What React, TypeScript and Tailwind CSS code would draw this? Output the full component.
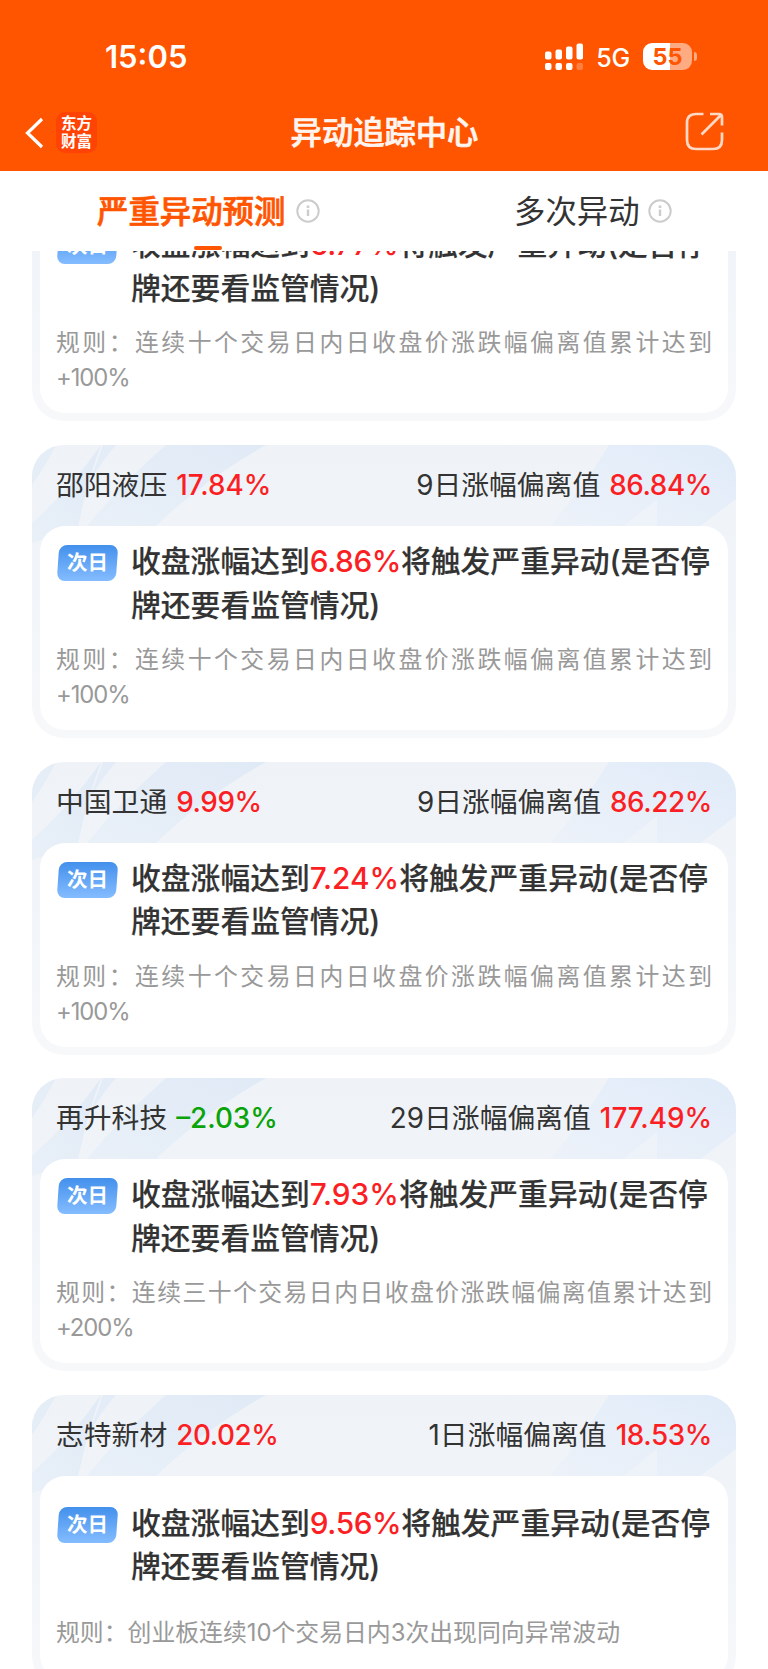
import React from "react";

type Item = { name: string; change: string; down?: boolean; days: string; dev: string; target: string; rule: string; limit?: string; roomy?: boolean };

const items: Item[] = [
  { name: "", change: "", days: "", dev: "", target: "6.77%", rule: "规则：连续十个交易日内日收盘价涨跌幅偏离值累计达到", limit: "+100%" },
  { name: "邵阳液压", change: "17.84%", days: "9日涨幅偏离值", dev: "86.84%", target: "6.86%", rule: "规则：连续十个交易日内日收盘价涨跌幅偏离值累计达到", limit: "+100%" },
  { name: "中国卫通", change: "9.99%", days: "9日涨幅偏离值", dev: "86.22%", target: "7.24%", rule: "规则：连续十个交易日内日收盘价涨跌幅偏离值累计达到", limit: "+100%" },
  { name: "再升科技", change: "–2.03%", down: true, days: "29日涨幅偏离值", dev: "177.49%", target: "7.93%", rule: "规则：连续三十个交易日内日收盘价涨跌幅偏离值累计达到", limit: "+200%" },
  { name: "志特新材", change: "20.02%", days: "1日涨幅偏离值", dev: "18.53%", target: "9.56%", rule: "规则：创业板连续10个交易日内3次出现同向异常波动", roomy: true },
];

function tracking(value: string) {
  return /^1?7|^–/.test(value) ? "tracking-normal" : "tracking-[-0.4px]";
}

function Stripes() {
  return (
    <svg className="absolute inset-0" width="704" height="110" viewBox="0 0 704 110" fill="none">
      <defs>
        <linearGradient id="sl" x1="1" y1="0" x2="0" y2="1">
          <stop offset="0" stopColor="#e0eaf6" />
          <stop offset="1" stopColor="#e9f0f8" />
        </linearGradient>
        <linearGradient id="sr" x1="1" y1="0" x2="0" y2="1">
          <stop offset="0" stopColor="#e0ebf9" />
          <stop offset="1" stopColor="#edf2f9" />
        </linearGradient>
      </defs>
      <path d="M134 0H234Q170 36 123 82H54Q88 40 134 0Z" fill="url(#sl)" />
      <path d="M69 0Q56 34 46 82L0 98V78Q38 44 69 0Z" fill="url(#sl)" />
      <path d="M71 0H84Q70 16 58 36Z" fill="#e3ecf7" />
      <path d="M0 0H24Q14 20 0 40Z" fill="#e5edf7" />
      <path d="M577 0H704V54L667 82H517Q550 44 577 0Z" fill="url(#sr)" />
      <path d="M590 82L625 54V82Z" fill="#eef3f9" />
    </svg>
  );
}

function Card({ it }: { it: Item }) {
  return (
    <section className="relative h-[293px] shrink-0 overflow-hidden rounded-[32px] bg-gradient-to-b from-[#eff3f8] via-[#f1f5f9] to-[#f7f8fa] px-2 pb-2">
      <Stripes />
      <div className="relative flex h-[81px] items-center justify-between pr-[16px] pb-px pl-4 text-[27.8px] leading-[40px] text-[#333]">
        <div className="flex gap-[9px]">
          <span>{it.name}</span>
          <span className={`font-medium ${tracking(it.change)} ${it.down ? "text-[#0aa30a]" : "text-[#fb1f24]"}`}>{it.change}</span>
        </div>
        <div className="flex gap-[9px]">
          <span>{it.days}</span>
          <span className={`font-medium ${tracking(it.dev)} text-[#fb1f24]`}>{it.dev}</span>
        </div>
      </div>
      <div className={`relative h-[204px] rounded-[25px] bg-white px-4 ${it.roomy ? "pt-[26px]" : "pt-[14px]"}`}>
        <div className="flex">
          <div className="mt-[5px] ml-[2px] h-9 w-[59px] shrink-0 -skew-x-[4deg] rounded-[8px] bg-gradient-to-b from-[#4290ec] to-[#84bcff] text-center">
            <span className="inline-block skew-x-[4deg] text-[20.5px] leading-[36px] font-bold text-white">次日</span>
          </div>
          <p className="ml-[14px] text-[29.8px] leading-[43.5px] font-medium whitespace-nowrap text-[#333] [-webkit-text-stroke:0.15px]">
            收盘涨幅达到<span className={`${tracking(it.target)} text-[#fb1f24] [-webkit-text-stroke:0px]`}>{it.target}</span>将触发严重异动(是否停
            <br />
            牌还要看监管情况)
          </p>
        </div>
        <p className={`text-justify text-[23.85px] leading-[35px] text-[#999] ${it.roomy ? "mt-[26px]" : "mt-[15px]"}`}>
          {it.rule}
          {it.limit && <span className="tracking-[-1.1px]">{it.limit}</span>}
        </p>
      </div>
    </section>
  );
}

function Info() {
  return (
    <svg width="24" height="24" viewBox="0 0 24 24" fill="none" stroke="#ccc">
      <circle cx="12" cy="12" r="10.7" strokeWidth="2" />
      <path d="M12 10.5V17" strokeWidth="2.4" />
      <path d="M12 6.5V9" strokeWidth="2.6" />
    </svg>
  );
}

function Signal() {
  return (
    <svg width="38" height="27" viewBox="0 0 38 27" fill="#fff">
      <rect x="0" y="8.5" width="6.5" height="8" rx="2" />
      <rect x="10.5" y="6.5" width="6.5" height="10" rx="2" />
      <rect x="21" y="3.5" width="6.5" height="13" rx="2" />
      <rect x="31.5" y="0.5" width="6.5" height="16" rx="2" />
      <rect x="0" y="20" width="6.5" height="7" rx="2" />
      <rect x="10.5" y="20" width="6.5" height="7" rx="2" />
      <rect x="21" y="20" width="6.5" height="7" rx="2" />
      <rect x="31.5" y="20" width="6.5" height="7" rx="2" opacity="0.25" />
    </svg>
  );
}

export default function App() {
  return (
    <div className="flex h-[1669px] w-[768px] flex-col overflow-hidden bg-white font-['Inter','Noto_Sans_CJK_SC',sans-serif]">
      <header className="h-[171px] shrink-0 bg-[#ff5500] text-white">
        <div className="flex h-[94px] items-center pt-[19px] pr-[71px] pl-[105px]">
          <span className="flex-1 pt-px text-[31px] leading-[40px] font-semibold">15:05</span>
          <Signal />
          <span className="ml-[13px] pt-[2px] text-[25px] leading-[40px] font-medium tracking-[-0.2px]">5G</span>
          <div className="ml-[13px] flex h-[27px] w-[49px] items-center justify-center rounded-[9px] bg-[linear-gradient(90deg,#fff_55%,#ffab82_55%)] text-[23.5px] leading-none font-bold text-[#ff5500]">55</div>
          <div className="ml-[2px] h-[9px] w-[3px] rounded-r-full bg-[#ffab82]" />
        </div>
        <div className="flex h-[77px] items-center pr-[44px] pl-[24px]">
          <svg width="20" height="32" viewBox="0 0 20 32" fill="none" stroke="#fff" strokeWidth="3.2">
            <path d="M18 2L3.500 16L18 30" />
          </svg>
          <div className="ml-3 flex h-[41px] w-[41px] flex-col items-center justify-center rounded-[9px] bg-[#ff4304] text-[15.5px] leading-[17.5px] font-bold">
            <span>东方</span>
            <span>财富</span>
          </div>
          <h1 className="flex-1 pt-px pr-[13px] text-center text-[31.3px] leading-[44px] font-medium text-[#fff5f0] [-webkit-text-stroke:0.7px]">异动追踪中心</h1>
          <svg width="39" height="39" viewBox="0 0 39 39" fill="none" stroke="#ffd9c6" strokeWidth="2.7" className="relative -top-px">
            <path d="M18.5 2H11Q2 2 2 11V28Q2 37 11 37H28Q37 37 37 28V20.500" />
            <path d="M25 2H34Q37 2 37 5V13.500M36 3L16.500 22.500" />
          </svg>
        </div>
      </header>
      <nav className="relative z-10 flex h-[80px] shrink-0 items-center bg-white text-[31.4px] leading-[44px]">
        <div className="flex w-1/2 items-center pl-[97px]">
          <span className="pt-px font-medium text-[#ff5500] [-webkit-text-stroke:0.7px]">严重异动预测</span>
          <span className="ml-[10.500px]"><Info /></span>
        </div>
        <div className="flex w-1/2 items-center pl-[130px] text-[#333]">
          <span className="pt-px">多次异动</span>
          <span className="ml-[8px]"><Info /></span>
        </div>
        <div className="absolute top-[75px] left-[194px] h-1 w-7 rounded-[2px] bg-[#ff5500]" />
      </nav>
      <main className="flex min-h-0 flex-1 flex-col overflow-hidden px-8">
        <div className="-mt-[122.6px] flex flex-col gap-[23.6px]">
          {items.map((it, i) => (
            <Card key={i} it={it} />
          ))}
        </div>
      </main>
    </div>
  );
}
